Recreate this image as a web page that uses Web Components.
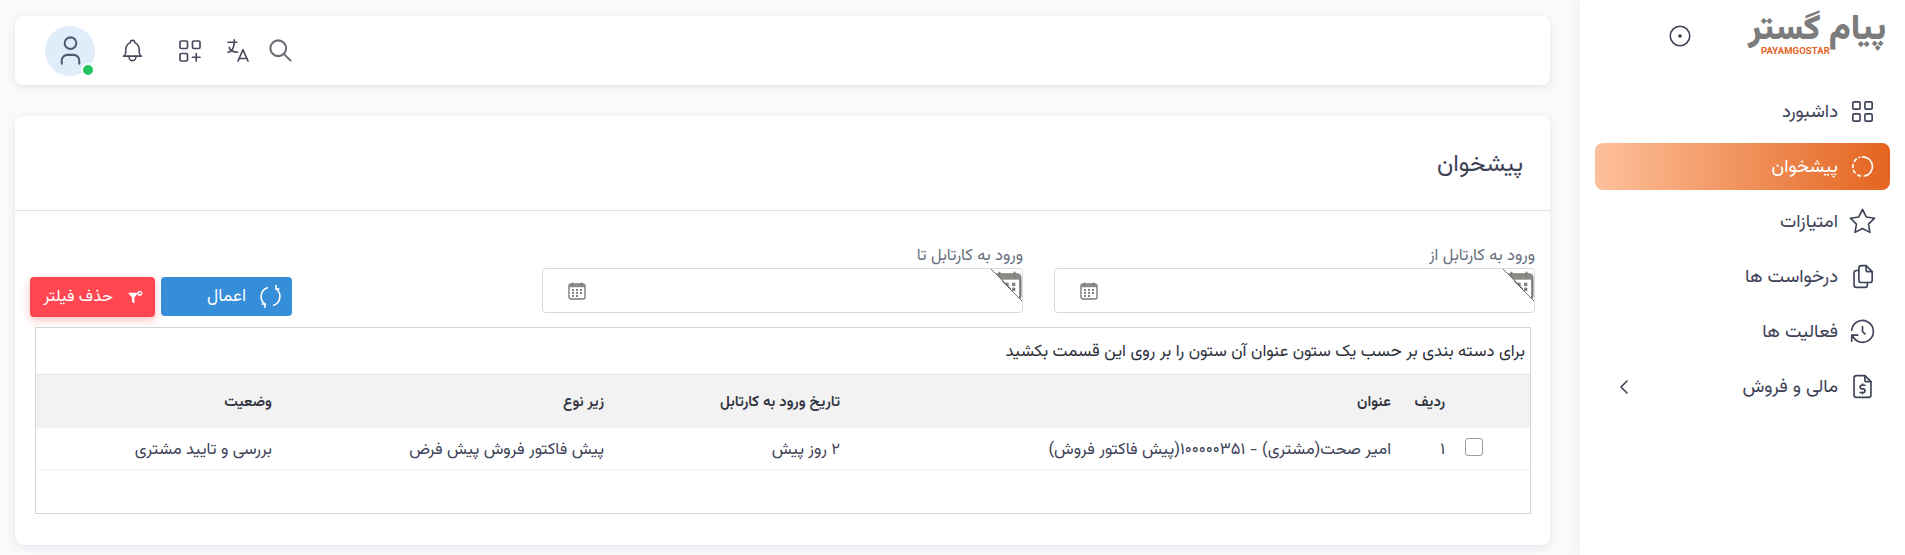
<!DOCTYPE html>
<html lang="fa" dir="rtl">
<head>
<meta charset="utf-8">
<title>پیشخوان</title>
<style>
  html, body { margin: 0; height: 555px; overflow: hidden; background: #faf9fb; }
  body { font-family: "Vazirmatn", "DejaVu Sans", sans-serif; color: #3d4257; display: flex; }
</style>
</head>
<body>
<app-sidebar>
  <nav-item icon="grid">داشبورد</nav-item>
  <nav-item icon="dashed" active>پیشخوان</nav-item>
  <nav-item icon="star">امتیازات</nav-item>
  <nav-item icon="files">درخواست ها</nav-item>
  <nav-item icon="history">فعالیت ها</nav-item>
  <nav-item icon="dollar" chevron>مالی و فروش</nav-item>
</app-sidebar>
<app-main>
  <top-bar></top-bar>
  <page-card title="پیشخوان">
    <filter-row>
      <date-field label="ورود به کارتابل از"></date-field>
      <date-field label="ورود به کارتابل تا"></date-field>
      <filter-actions></filter-actions>
    </filter-row>
    <cartable-grid></cartable-grid>
  </page-card>
</app-main>

<script>
const ICONS = {
  grid: '<rect x="4" y="4" width="6" height="6" rx="1"/><rect x="14" y="4" width="6" height="6" rx="1"/><rect x="4" y="14" width="6" height="6" rx="1"/><rect x="14" y="14" width="6" height="6" rx="1"/>',
  dashed: '<path d="M12 4a8 8 0 0 1 1.5 15.9"/><path d="M10.3 19.8a8 8 0 0 1 -2.2 -.8"/><path d="M5.9 17.2a8 8 0 0 1 -1.4 -2"/><path d="M4 12.8a8 8 0 0 1 .2 -2.4"/><path d="M5.2 7.8a8 8 0 0 1 1.8 -2"/><path d="M9.2 4.5a8 8 0 0 1 .5 -.2"/>',
  star: '<path d="M12 17.75l-6.172 3.245l1.179 -6.873l-5 -4.867l6.9 -1l3.086 -6.253l3.086 6.253l6.9 1l-5 4.867l1.179 6.873z"/>',
  files: '<path d="M15 3v4a1 1 0 0 0 1 1h4"/><path d="M18 17h-7a2 2 0 0 1 -2 -2v-10a2 2 0 0 1 2 -2h4l5 5v7a2 2 0 0 1 -2 2z"/><path d="M16 17v2a2 2 0 0 1 -2 2h-7a2 2 0 0 1 -2 -2v-10a2 2 0 0 1 2 -2h2"/>',
  history: '<path d="M12 8v4l2 2"/><path d="M3.05 11a9 9 0 1 1 .5 4m-.5 5v-5h5"/>',
  dollar: '<path d="M14 3v4a1 1 0 0 0 1 1h4"/><path d="M17 21h-10a2 2 0 0 1 -2 -2v-14a2 2 0 0 1 2 -2h7l5 5v11a2 2 0 0 1 -2 2z"/><path d="M14 11h-2.5a1.5 1.5 0 0 0 0 3h1a1.5 1.5 0 0 1 0 3h-2.5"/><path d="M12 17v1m0 -8v1"/>',
  chevron: '<path d="M15 6l-6 6l6 6"/>',
  target: '<circle cx="12" cy="12" r="9"/><circle cx="12" cy="12" r="1"/>',
  bell: '<path d="M10 5a2 2 0 1 1 4 0a7 7 0 0 1 4 6v3a4 4 0 0 0 2 3h-16a4 4 0 0 0 2 -3v-3a7 7 0 0 1 4 -6"/><path d="M9 17v1a3 3 0 0 0 6 0v-1"/>',
  apps: '<rect x="4" y="4" width="6" height="6" rx="1"/><rect x="14" y="4" width="6" height="6" rx="1"/><rect x="4" y="14" width="6" height="6" rx="1"/><path d="M14 17h6M17 14v6"/>',
  language: '<path d="M4 5h7"/><path d="M9 3v2c0 4.418 -2.239 8 -5 8"/><path d="M5 9c0 2.144 2.952 3.908 6.7 4"/><path d="M12 20l4 -9l4 9"/><path d="M19.1 18h-6.2"/>',
  search: '<circle cx="10" cy="10" r="7"/><path d="M21 21l-6 -6"/>',
  user: '<path d="M8 7a4 4 0 1 0 8 0a4 4 0 0 0 -8 0"/><path d="M6 21v-2a4 4 0 0 1 4 -4h4a4 4 0 0 1 4 4v2"/>',
  refresh: '<path d="M9 3.5a9 9 0 0 0 -2 16"/><path d="M15 20.5a9 9 0 0 0 2 -16"/><path d="M17.5 1.5l-.5 3l3 .3"/><path d="M6.5 22.5l.5 -3l-3 -.3"/>'
};
const svg = (name, size, sw = 1.75) =>
  `<svg xmlns="http://www.w3.org/2000/svg" width="${size}" height="${size}" viewBox="0 0 24 24" fill="none" stroke="currentColor" stroke-width="${sw}" stroke-linecap="round" stroke-linejoin="round">${ICONS[name]}</svg>`;

const calendar = (size) => `<svg xmlns="http://www.w3.org/2000/svg" width="${size}" height="${size}" viewBox="0 0 18 18">
  <rect x="1" y="2" width="16" height="15" rx="2" fill="none" stroke="#7d7b78" stroke-width="1.4"/>
  <rect x="1" y="2" width="16" height="3.2" fill="#8c8a87"/>
  <path d="M4.5 .5v3M13.5 .5v3" stroke="#7d7b78" stroke-width="1.2"/>
  <g fill="#85817d">
    <rect x="4" y="7" width="2" height="2"/><rect x="8" y="7" width="2" height="2"/><rect x="12" y="7" width="2" height="2"/>
    <rect x="4" y="10" width="2" height="2"/><rect x="8" y="10" width="2" height="2"/><rect x="12" y="10" width="2" height="2"/>
    <rect x="4" y="13" width="2" height="2"/><rect x="8" y="13" width="2" height="2"/>
  </g></svg>`;

class AppSidebar extends HTMLElement {
  constructor() {
    super();
    this.attachShadow({ mode: 'open' });
    this.shadowRoot.innerHTML = `
      <style>
        :host { display: block; width: 325px; height: 555px; flex: none; background: #fff; box-shadow: 0 0 14px rgba(60, 50, 90, .07); box-sizing: border-box; padding: 0 15px; }
        .brand { height: 88px; display: flex; align-items: flex-start; justify-content: space-between; }
        .logo { width: 135px; height: 46px; margin-top: 14px; margin-right: 4px; position: relative; text-align: center; }
        .fa { font: 900 35px/34px "Vazirmatn", sans-serif; color: #7c7c7c; display: block; white-space: nowrap; }
        .en { position: absolute; left: 10px; top: 32px; font: bold 9.5px/10px "Roboto", sans-serif; letter-spacing: .1px; color: #e4641f; direction: ltr; }
        .toggle { color: #3d4257; margin: 23px 0 0 72px; display: flex; }
        .items { display: flex; flex-direction: column; gap: 8px; }
      </style>
      <div class="brand">
        <div class="logo"><span class="fa">پیام گستر</span><span class="en">PAYAMGOSTAR</span></div>
        <span class="toggle">${svg('target', 26, 1.4)}</span>
      </div>
      <div class="items"><slot></slot></div>`;
  }
}

class NavItem extends HTMLElement {
  constructor() {
    super();
    this.attachShadow({ mode: 'open' });
  }
  connectedCallback() {
    const chev = this.hasAttribute('chevron') ? `<span class="chev">${svg('chevron', 24, 1.6)}</span>` : '';
    this.shadowRoot.innerHTML = `
      <style>
        :host { display: flex; align-items: center; height: 47px; border-radius: 8px; padding: 0 13px 0 0; color: #3d4257; font-size: 18.5px; }
        :host([active]) { background: linear-gradient(to left, #e4641f, #fdc09b); color: #fff; }
        .ic { display: flex; margin-left: 10px; }
        .txt { margin-top: 2px; }
        .chev { display: flex; margin-right: auto; margin-left: 17px; }
      </style>
      <span class="ic">${svg(this.getAttribute('icon'), 29, 1.35)}</span><span class="txt"><slot></slot></span>${chev}`;
  }
}

class AppMain extends HTMLElement {
  constructor() {
    super();
    this.attachShadow({ mode: 'open' });
    this.shadowRoot.innerHTML = `
      <style>
        :host { display: flex; flex-direction: column; gap: 31px; flex: 1; min-width: 0; padding: 16px 30px 0 15px; box-sizing: border-box; height: 555px; }
      </style>
      <slot></slot>`;
  }
}

class TopBar extends HTMLElement {
  constructor() {
    super();
    this.attachShadow({ mode: 'open' });
    this.shadowRoot.innerHTML = `
      <style>
        :host { display: flex; direction: ltr; align-items: center; height: 69px; flex: none; background: #fff; border-radius: 8px; box-shadow: 0 2px 8px rgba(60, 50, 90, .1); padding-left: 30px; color: #4a4a5e; }
        .avatar { width: 50px; height: 50px; border-radius: 50%; background: #e1ecfb; display: flex; align-items: center; justify-content: center; position: relative; color: #525a70; }
        .dot { position: absolute; width: 10px; height: 10px; background: #22c55e; border: 2px solid #fff; border-radius: 50%; right: 0; bottom: -1px; }
        span { display: flex; }
        .a { margin-left: 24px; } .b { margin-left: 29px; } .c { margin-left: 17.5px; } .d { margin-left: 14px; color: #6a6a75; }
      </style>
      <div class="avatar">${svg('user', 35, 1.4)}<i class="dot"></i></div>
      <span class="a">${svg('bell', 27, 1.4)}</span>
      <span class="b">${svg('apps', 30, 1.35)}</span>
      <span class="c">${svg('language', 30, 1.35)}</span>
      <span class="d">${svg('search', 27, 1.8)}</span>`;
  }
}

class PageCard extends HTMLElement {
  constructor() {
    super();
    this.attachShadow({ mode: 'open' });
  }
  connectedCallback() {
    this.shadowRoot.innerHTML = `
      <style>
        :host { display: block; height: 429px; flex: none; background: #fff; border-radius: 8px; box-shadow: 0 2px 8px rgba(60, 50, 90, .1); }
        header { height: 95px; box-sizing: border-box; border-bottom: 1px solid #dfe3e6; display: flex; align-items: center; padding: 3px 27px 0 0; font-size: 24px; color: #3d4257; }
        .body { padding: 0 15px; }
      </style>
      <header>${this.getAttribute('title')}</header>
      <div class="body"><slot></slot></div>`;
  }
}

class FilterRow extends HTMLElement {
  constructor() {
    super();
    this.attachShadow({ mode: 'open' });
    this.shadowRoot.innerHTML = `
      <style>
        :host { display: grid; grid-template-columns: repeat(3, 1fr); gap: 31px; padding-top: 33px; height: 116px; box-sizing: border-box; }
      </style>
      <slot></slot>`;
  }
}

class DateField extends HTMLElement {
  constructor() {
    super();
    this.attachShadow({ mode: 'open' });
  }
  connectedCallback() {
    this.shadowRoot.innerHTML = `
      <style>
        :host { display: block; }
        label { display: block; font-size: 16.5px; line-height: 24px; color: #67707e; }
        .box { height: 45px; box-sizing: border-box; border: 1px solid #d9d9dc; border-radius: 4px; position: relative; display: flex; align-items: center; justify-content: flex-end; padding-left: 25px; }
        .box > svg { display: block; }
        .corner { position: absolute; top: 0; right: 0; width: 31px; height: 32px; clip-path: polygon(0 0, 100% 0, 100% 100%); overflow: hidden; }
        .corner svg { display: block; margin: 2px 0 0 1px; }
        .diag { position: absolute; top: 0; right: 0; width: 31px; height: 32px; background: linear-gradient(to top right, transparent 49%, #6f6f6f 49%, #6f6f6f 51%, transparent 51%); }
      </style>
      <label>${this.getAttribute('label')}</label>
      <div class="box">
        <div class="corner">${calendar(30)}</div><div class="diag"></div>
        ${calendar(18)}
      </div>`;
  }
}

class FilterActions extends HTMLElement {
  constructor() {
    super();
    this.attachShadow({ mode: 'open' });
    this.shadowRoot.innerHTML = `
      <style>
        :host { display: flex; align-items: flex-start; justify-content: flex-end; gap: 6px; padding-top: 33px; direction: rtl; }
        button { font-family: inherit; font-size: 17.5px; color: #fff; border: 0; border-radius: 4px; display: flex; align-items: center; padding: 0; direction: rtl; }
        .red { width: 125px; height: 40px; background: #ff4651; box-shadow: 0 3px 8px rgba(255, 70, 81, .35); gap: 15px; padding-right: 12px; box-sizing: border-box; font-size: 16.5px; }
        .blue { width: 131px; height: 39px; background: #368dd8; gap: 12px; padding-right: 9px; box-sizing: border-box; }
      </style>
      <button class="blue">${svg('refresh', 25, 1.5)}<span>اعمال</span></button>
      <button class="red">
        <svg xmlns="http://www.w3.org/2000/svg" width="15" height="15" viewBox="0 0 14 14"><path d="M0 2.5h9.5L6 7v5.5L3.7 11V7z" fill="#fff"/><circle cx="11" cy="3" r="2.4" fill="#fff"/><path d="M10 2l2 2M12 2l-2 2" stroke="#ff4651" stroke-width=".9"/></svg>
        <span>حذف فیلتر</span>
      </button>`;
  }
}

class CartableGrid extends HTMLElement {
  constructor() {
    super();
    this.attachShadow({ mode: 'open' });
    this.shadowRoot.innerHTML = `
      <style>
        :host { display: block; height: 187px; box-sizing: border-box; border: 1px solid #cfd8dc; margin: 0 4px 0 5px; font-size: 16.6px; color: #3d4257; }
        .group { height: 47px; box-sizing: border-box; border-bottom: 1px solid #e2e5e7; display: flex; align-items: center; padding: 2px 5px 0 0; color: #2b2f3a; font-size: 16.8px; }
        .row { display: grid; grid-template-columns: 85px 54px 551px 236px 332px 1fr; align-items: center; box-sizing: border-box; padding-top: 2px; }
        .head { height: 53px; background: #f2f2f2; font-weight: 600; font-size: 15px; color: #30343f; }
        .data { height: 42px; border-bottom: 1px solid #f0f0f0; margin-left: 2px; }
        .check { width: 18px; height: 18px; box-sizing: border-box; border: 1px solid #9a9aa2; border-radius: 3px; margin: -6px 47px 0 0; background: #fff; }
      </style>
      <div class="group">برای دسته بندی بر حسب یک ستون عنوان آن ستون را بر روی این قسمت بکشید</div>
      <div class="row head"><span></span><span>ردیف</span><span>عنوان</span><span>تاریخ ورود به کارتابل</span><span>زیر نوع</span><span>وضعیت</span></div>
      <div class="row data"><span class="check"></span><span>۱</span><span>امیر صحت(مشتری) - ۱۰۰۰۰۰۳۵۱(پیش فاکتور فروش)</span><span>۲ روز پیش</span><span>پیش فاکتور فروش پیش فرض</span><span>بررسی و تایید مشتری</span></div>`;
  }
}

customElements.define('app-sidebar', AppSidebar);
customElements.define('nav-item', NavItem);
customElements.define('app-main', AppMain);
customElements.define('top-bar', TopBar);
customElements.define('page-card', PageCard);
customElements.define('filter-row', FilterRow);
customElements.define('date-field', DateField);
customElements.define('filter-actions', FilterActions);
customElements.define('cartable-grid', CartableGrid);
</script>
</body>
</html>
